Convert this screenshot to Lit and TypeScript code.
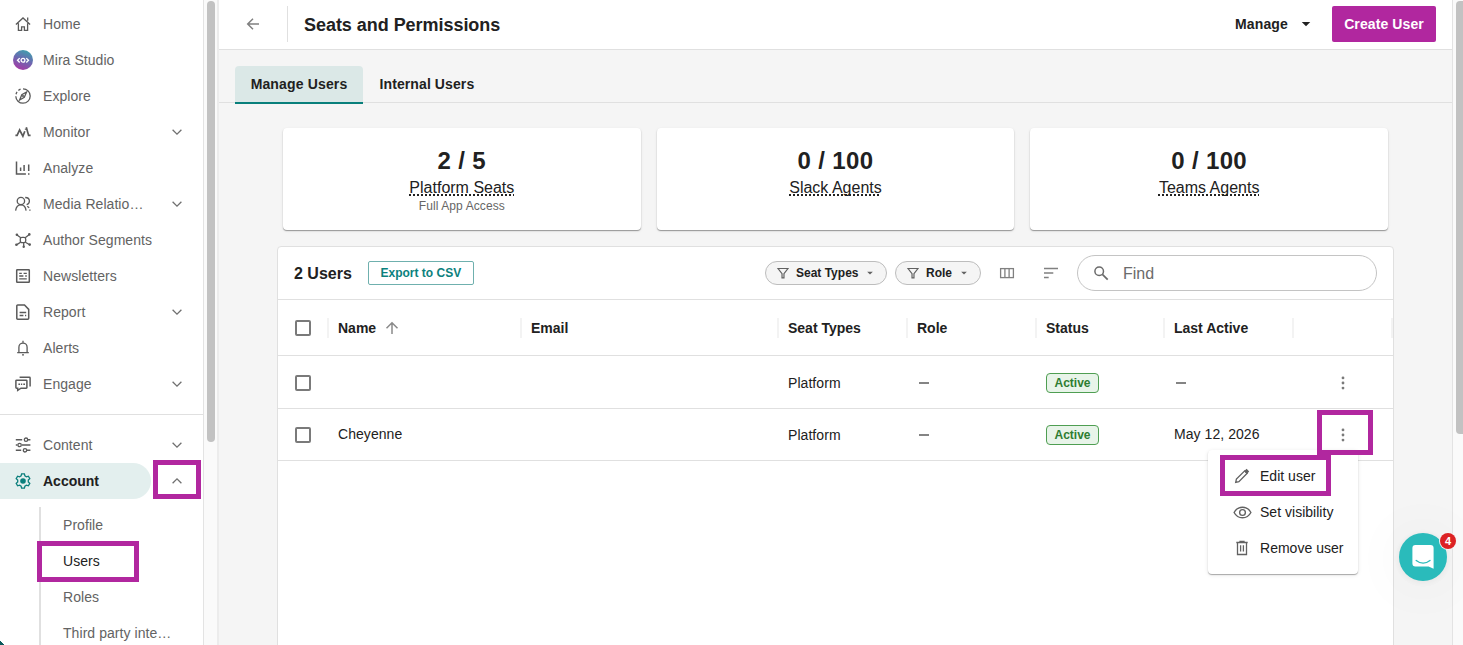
import { LitElement, html, css, svg, nothing } from "lit";
import { customElement, property } from "lit/decorators.js";
import { classMap } from "lit/directives/class-map.js";

const glyphs: Record<string, unknown> = {
  home: svg`<path d="M.9 8.400 8 1.900l7.100 6.500M3.400 7.200v7.200h3.200v-3.500h2.800v3.500h3.200V7.200M12.700 1.600v3.200" />`,
  explore: svg`<circle cx="8" cy="8" r="7.200" stroke-dasharray="33.500 2 2.500 2 2.500 2.700" transform="rotate(-90 8 8)"/><path d="M11.600 4 9.300 9.300 4.600 12l2.200-5.300z"/><circle cx="8" cy="8" r="1.100" fill="currentColor" stroke="none"/>`,
  monitor: svg`<path stroke-width="1.700" d="M.4 11.400h1.700L4.600 6l3.300 6.200 1.900-5M11.300 3.200l2.300 8.200h2"/><path stroke-width="1.700" d="M10.700 4.600v1.200"/>`,
  analyze: svg`<path d="M1.500 1.600v12.300h9.400M5.600 11V7.600M9.100 11V5M13.700 11V4.400M13 13.900h1.500" stroke-width="1.500"/>`,
  people: svg`<circle cx="5.900" cy="5" r="3.700"/><path d="M.6 14.600c.5-3.400 2.500-5.700 5.300-5.700 2.500 0 4.700 2 5.200 5.700M10.200 1.500c2.700 0 4.200 1.600 4.200 3.600 0 1.700-1 3.200-2.800 3.500M12.300 10.300l1.900 1.400M14.900 13.500v1.200"/>`,
  segments: svg`<rect x="5.300" y="5.300" width="5.400" height="5.400" rx="1.700"/><path d="M5.800 5.800 2 3M10.200 5.800 14 2.800M5.600 10.200 1.800 12.600M10.400 10.200l3.800 2.300M8.700 10.600v4"/><g fill="currentColor" stroke="none"><circle cx="1.900" cy="2.700" r="1.300"/><circle cx="14.300" cy="2.400" r="1.300"/><circle cx="1.400" cy="12.700" r="1.300"/><circle cx="14.700" cy="12.600" r="1.300"/><circle cx="8.700" cy="14.700" r="1.200"/></g>`,
  news: svg`<rect x="1.700" y="1.700" width="12.600" height="12.600" rx=".6" stroke-width="1.500"/><path d="M4.200 5.300h2.600M8.600 5.300h3.200M4.200 8h4.200M10.200 8h1.600M4.200 10.800h7.600"/>`,
  report: svg`<path stroke-width="1.500" d="M2.700 1h6.800l4.200 4.400v8.900a.9.9 0 0 1-.9.9H2.700a.9.9 0 0 1-.9-.9V1.900a.9.9 0 0 1 .9-.9z"/><path d="M4.600 8.500h6.600M4.600 11.500h3.800M10 11.500h1.200"/>`,
  bell: svg`<path d="M2.200 12.600h11.600M3.900 12.600V7.200a4.100 4.100 0 0 1 8.200 0v5.400M8 3V.8M7 14.900h2"/>`,
  engage: svg`<path stroke-width="1.500" d="M1.600 4.200h9.600a.7.7 0 0 1 .7.7v6.600a.7.7 0 0 1-.7.7H6l-3.300 2.200v-2.200H1.600a.7.7 0 0 1-.7-.7V4.900a.7.7 0 0 1 .7-.7zM4.600 1.300h9.800a.7.7 0 0 1 .7.700v8.400"/><path stroke-width="1.600" d="M3.400 8.200h1.600M5.900 8.200h1.300M8.300 8.200H10"/>`,
  content: svg`<path d="M.8 2.700h6.400M13 2.700h2.400M.8 8h1.400M7 8h8.400M.8 13.300h5.400M11.800 13.300h3.600" stroke-width="1.500"/><circle cx="11" cy="2.700" r="1.700"/><circle cx="4.600" cy="8" r="1.700"/><circle cx="10" cy="13.300" r="1.700"/>`,
  gear: svg`<path d="M6.600.9h2.800l.5 2 1.500.9 2-.6 1.400 2.400-1.500 1.500v1.800l1.500 1.500-1.400 2.400-2-.6-1.500.9-.5 2H6.600l-.5-2-1.500-.9-2 .6-1.400-2.400 1.500-1.500V7.100L1.200 5.600l1.400-2.400 2 .6 1.500-.9z"/><circle cx="8" cy="8" r="2.800" fill="currentColor" stroke="none"/>`,
  down: svg`<path d="M3.600 5.700 8 10.100l4.400-4.400"/>`,
  up: svg`<path d="M3.600 10.300 8 5.900l4.400 4.400"/>`,
  back: svg`<path stroke-width="1.500" d="M14 8H2.900M8 2.700 2.700 8 8 13.300"/>`,
  sort: svg`<path stroke-width="1.500" d="M8 13.900V2.900M2.500 8.200 8 2.700l5.500 5.500"/>`,
  funnel: svg`<path stroke-width="1.600" d="M1.400 2h13.200L9.300 9v5.600H6.700V9z"/>`,
  columns: svg`<rect x="1.600" y="3.600" width="12.800" height="9"/><path d="M5.900 3.600v9M10.100 3.600v9"/>`,
  density: svg`<path d="M1 3.500h14M1 8h9.300M1 12.500h4.700" stroke-width="1.500"/>`,
  search: svg`<circle cx="6.200" cy="6.200" r="4.300" stroke-width="1.500"/><path stroke-width="1.700" d="m9.400 9.400 5.300 5.300"/>`,
  caret: svg`<path d="M4.200 6.200h7.600L8 10z" fill="currentColor" stroke="none"/>`,
  dots: svg`<g fill="currentColor" stroke="none"><circle cx="8" cy="2.900" r="1.400"/><circle cx="8" cy="8" r="1.400"/><circle cx="8" cy="13.100" r="1.400"/></g>`,
  pencil: svg`<path d="M1.700 14.300l.7-3.200 8.300-8.300 2.500 2.500-8.300 8.300z"/><path d="M11 3.200 12.600 1.700l1.700 1.700L12.800 5z" fill="currentColor"/>`,
  eye: svg`<path d="M.1 8C1.700 5 4.600 3 8 3s6.300 2 7.900 5c-1.600 3-4.500 5-7.900 5S1.700 11 .1 8z"/><circle cx="8" cy="8" r="2.700"/>`,
  trash: svg`<path d="M2.300 2.500h11.400M6 2.300V1.300h4v1M3.500 2.600v11.900h9V2.600M6.600 5.300v6.200M9.400 5.300v6.200"/>`,
};

@customElement("ui-icon")
export class UiIcon extends LitElement {
  @property() name = "";
  @property({ type: Number }) size = 16;

  static styles = css`
    :host { display: inline-flex; flex: none; }
    svg { display: block; overflow: visible; fill: none; stroke: currentColor; stroke-width: 1.3; }
  `;

  render() {
    return html`<svg width=${this.size} height=${this.size} viewBox="0 0 16 16">${glyphs[this.name]}</svg>`;
  }
}

interface NavItem {
  label: string;
  icon: string;
  open?: boolean;
  active?: boolean;
}

const mainNav: NavItem[] = [
  { label: "Home", icon: "home" },
  { label: "Mira Studio", icon: "mira" },
  { label: "Explore", icon: "explore" },
  { label: "Monitor", icon: "monitor", open: false },
  { label: "Analyze", icon: "analyze" },
  { label: "Media Relatio…", icon: "people", open: false },
  { label: "Author Segments", icon: "segments" },
  { label: "Newsletters", icon: "news" },
  { label: "Report", icon: "report", open: false },
  { label: "Alerts", icon: "bell" },
  { label: "Engage", icon: "engage", open: false },
];

const settingsNav: NavItem[] = [
  { label: "Content", icon: "content", open: false },
  { label: "Account", icon: "gear", open: true, active: true },
];

const accountPages = ["Profile", "Users", "Roles", "Third party inte…"];

@customElement("side-nav")
export class SideNav extends LitElement {
  static styles = css`
    :host {
      display: block; width: 203px; height: 645px; flex: none; overflow: hidden; position: relative;
      background: #fff; border-right: 1px solid #e3e3e3; color: #636363; letter-spacing: 0.06px;
    }
    .group { padding: 6px 0 12px; }
    .group + .group { border-top: 1px solid #e0e0e0; padding: 12px 0 8px; }
    .row { display: flex; align-items: center; height: 36px; }
    .link { display: flex; align-items: center; width: 151px; height: 36px; padding-left: 13px; gap: 10px; box-sizing: border-box; white-space: nowrap; }
    .link.active { background: #e3efee; border-radius: 0 18px 18px 0; color: #212121; font-weight: 700; letter-spacing: 0; }
    .slot { display: flex; flex: none; width: 20px; justify-content: center; }
    .slot ui-icon { color: #5a5a5a; }
    .active .slot ui-icon { color: #0b7f7c; }
    .toggle { display: flex; width: 52px; justify-content: center; color: #707070; }
    .pages { margin-left: 39px; border-left: 2px solid #e0e0e0; padding-left: 22px; }
    .page { display: flex; align-items: center; height: 36px; }
    .page.current { color: #212121; }
    .mark { position: absolute; box-sizing: border-box; border: 5px solid #b1279f; }
    .mark.expand { left: 153px; top: 460px; width: 48px; height: 39px; }
    .mark.users { left: 37px; top: 541px; width: 102px; height: 41px; }
    .corner { position: absolute; left: -5px; bottom: -5px; width: 10px; height: 10px; background: linear-gradient(45deg, #0b5a5c 72%, transparent 73%); }
    .mira { display: block; }
  `;

  private icon(item: NavItem) {
    if (item.icon !== "mira") return html`<ui-icon name=${item.icon}></ui-icon>`;
    return html`<svg class="mira" width="20" height="20" viewBox="0 0 20 20">
      <defs><linearGradient id="g" x1=".75" y1="0" x2=".35" y2="1"><stop offset="0" stop-color="#3ca3ae"/><stop offset=".5" stop-color="#6b68b0"/><stop offset="1" stop-color="#a63aa6"/></linearGradient></defs>
      <circle cx="10" cy="10" r="10" fill="url(#g)"/>
      <g fill="none" stroke="#fff" stroke-width="1.300"><path d="M6.700 8.100 4.500 10.300l2.200 2.200M13.300 8.100l2.200 2.200-2.200 2.200"/><circle cx="10" cy="10.300" r="1.900"/></g>
    </svg>`;
  }

  private row(item: NavItem) {
    return html`<div class="row">
      <div class=${classMap({ link: true, active: !!item.active })}><span class="slot">${this.icon(item)}</span><span>${item.label}</span></div>
      ${item.open === undefined ? nothing : html`<div class="toggle"><ui-icon name=${item.open ? "up" : "down"}></ui-icon></div>`}
    </div>`;
  }

  render() {
    return html`
      <div class="group">${mainNav.map((i) => this.row(i))}</div>
      <div class="group">${settingsNav.map((i) => this.row(i))}</div>
      <div class="pages">${accountPages.map((p) => html`<div class=${classMap({ page: true, current: p === "Users" })}>${p}</div>`)}</div>
      <div class="mark expand"></div>
      <div class="mark users"></div>
      <div class="corner"></div>`;
  }
}

@customElement("seat-card")
export class SeatCard extends LitElement {
  @property() count = "";
  @property() label = "";
  @property() note = "";

  static styles = css`
    :host {
      display: flex; flex-direction: column; align-items: center; height: 102px; box-sizing: border-box; padding-top: 16px;
      background: #fff; border-radius: 4px; color: #212121;
      box-shadow: 0 1px 1px rgba(0, 0, 0, 0.34), 0 1px 3px rgba(0, 0, 0, 0.1);
    }
    .count { font-size: 24px; line-height: 34px; font-weight: 700; letter-spacing: 0.35px; }
    .label { font-size: 16px; line-height: 20px; text-decoration: underline dotted 1.5px; text-underline-offset: 0.5px; text-decoration-skip-ink: none; }
    .note { font-size: 12px; line-height: 16px; color: #666; letter-spacing: 0.1px; }
  `;

  render() {
    return html`<div class="count">${this.count}</div><div class="label">${this.label}</div>
      ${this.note ? html`<div class="note">${this.note}</div>` : nothing}`;
  }
}

interface UserRow { name: string; seat: string; lastActive: string; }
const users: UserRow[] = [
  { name: "", seat: "Platform", lastActive: "" },
  { name: "Cheyenne", seat: "Platform", lastActive: "May 12, 2026" },
];
const headers = ["Name", "Email", "Seat Types", "Role", "Status", "Last Active", ""];

@customElement("user-table")
export class UserTable extends LitElement {
  static styles = css`
    :host { display: block; box-sizing: border-box; height: 420px; background: #fff; border: 1px solid #e0e0e0; border-radius: 4px 4px 0 0; color: #212121; }
    .bar { display: flex; align-items: center; height: 52px; padding: 0 16px; border-bottom: 1px solid #e0e0e0; }
    .total { font-size: 16px; font-weight: 700; padding-top: 1px; }
    .export { margin-left: 16px; height: 24px; width: 106px; box-sizing: border-box; border: 1px solid #6fb0ae; border-radius: 2px; display: flex; align-items: center; justify-content: center; color: #0b817d; font-size: 12px; font-weight: 700; }
    .chips { display: flex; gap: 8px; margin-left: auto; }
    .chip { height: 24px; box-sizing: border-box; border: 1px solid #bdbdbd; border-radius: 12px; background: #f5f5f5; display: flex; align-items: center; padding: 0 9px 0 11px; gap: 7px; font-size: 12px; font-weight: 700; white-space: nowrap; }
    .chip ui-icon { color: #616161; }
    .chip.seats { width: 122px; }
    .chip.role { width: 86px; }
    .caret { margin-left: -1px; }
    .tools { display: flex; gap: 28px; margin: 0 18px 0 18px; color: #808080; }
    .find { display: flex; align-items: center; width: 300px; height: 36px; box-sizing: border-box; border: 1px solid #c4c4c4; border-radius: 18px; padding-left: 15px; gap: 14px; font-size: 16px; color: #6b6b6b; }
    .find span { padding-top: 1px; }
    .grid { display: grid; grid-template-columns: 50px 193px 257px 129px 129px 128px 129px 100px; align-items: center; border-bottom: 1px solid #e0e0e0; }
    .head { height: 55px; font-weight: 700; }
    .body { height: 52px; letter-spacing: 0.06px; }
    .body.last { height: 51px; }
    .body.last .name, .body.last .active { padding-bottom: 1px; }
    .th { display: flex; align-items: center; height: 20px; gap: 8px; margin-left: -1px; padding-left: 9px; border-left: 2px solid #f3f3f3; }
    .th:last-child { border-right: 2px solid #f3f3f3; }
    .th ui-icon { color: #8a8a8a; }
    .td { padding-left: 10px; display: flex; align-items: center; }
    .td.seat, .td.role, .td.status, .check, .td.menu, .td.active { padding-top: 1px; }
    .body.last .td.active { padding-top: 0; }
    .check { display: flex; padding-left: 17px; }
    .head .check { padding-top: 0; }
    .box { width: 16px; height: 16px; box-sizing: border-box; border: 2px solid #7a7a7a; border-radius: 2px; }
    .dash { margin-left: 2px; width: 10px; height: 2px; background: #848484; }
    .badge { display: flex; align-items: center; justify-content: center; width: 53px; height: 20px; box-sizing: border-box; border: 1px solid #4f9e52; border-radius: 4px; background: #e8f4e9; color: #2e7d32; font-size: 12px; font-weight: 700; letter-spacing: 0; }
    .td.menu { padding-left: 42px; color: #7a7a7a; }
  `;

  private row(u: UserRow, last: boolean) {
    return html`<div class=${classMap({ grid: true, body: true, last })}>
      <div class="check"><span class="box"></span></div>
      <div class="td name">${u.name}</div>
      <div class="td"></div>
      <div class="td seat">${u.seat}</div>
      <div class="td role"><span class="dash"></span></div>
      <div class="td status"><span class="badge">Active</span></div>
      <div class="td active">${u.lastActive || html`<span class="dash"></span>`}</div>
      <div class="td menu"><ui-icon name="dots"></ui-icon></div>
    </div>`;
  }

  render() {
    return html`
      <div class="bar">
        <span class="total">2 Users</span>
        <span class="export">Export to CSV</span>
        <div class="chips">
          <span class="chip seats"><ui-icon name="funnel" size="12"></ui-icon><span>Seat Types</span><ui-icon class="caret" name="caret" size="12"></ui-icon></span>
          <span class="chip role"><ui-icon name="funnel" size="12"></ui-icon><span>Role</span><ui-icon class="caret" name="caret" size="12"></ui-icon></span>
        </div>
        <div class="tools"><ui-icon name="columns"></ui-icon><ui-icon name="density"></ui-icon></div>
        <div class="find"><ui-icon name="search"></ui-icon><span>Find</span></div>
      </div>
      <div class="grid head">
        <div class="check"><span class="box"></span></div>
        ${headers.map((h) => html`<div class="th">${h}${h === "Name" ? html`<ui-icon name="sort"></ui-icon>` : nothing}</div>`)}
      </div>
      ${users.map((u, i) => this.row(u, i === users.length - 1))}`;
  }
}

@customElement("app-root")
export class AppRoot extends LitElement {
  static styles = css`
    :host {
      display: flex; position: relative; width: 1463px; height: 645px; overflow: hidden; background: #f5f5f5;
      font-family: "Liberation Sans", Arial, sans-serif; font-size: 14px; line-height: 20px; color: #212121;
    }
    .scroll { flex: none; box-sizing: border-box; height: 645px; background: #fafafa; padding-top: 1px; }
    .scroll.left { width: 15px; padding-left: 3px; border-right: 2px solid #ececec; }
    .scroll.right { width: 11px; padding-left: 3px; border-left: 1px solid #e3e3e3; }
    .thumb { background: #c2c2c2; border-radius: 4px; width: 8px; height: 441px; }
    .right .thumb { width: 7px; height: 433px; border-radius: 4px 0 0 4px; }
    main { flex: 1; min-width: 0; }
    header { display: flex; align-items: center; height: 49px; box-sizing: content-box; border-bottom: 1px solid #e0e0e0; background: #fff; }
    .back { display: flex; justify-content: center; width: 68px; color: #808080; padding-bottom: 1px; }
    .title { border-left: 1px solid #e0e0e0; padding-left: 16px; height: 36px; line-height: 38px; font-size: 18px; font-weight: 700; letter-spacing: -0.04px; margin-bottom: 1px; }
    .manage { margin-left: auto; display: flex; align-items: center; gap: 9px; font-weight: 700; letter-spacing: 0.15px; padding-bottom: 1px; }
    .create { margin: 0 16px 1px 17px; width: 104px; height: 36px; background: #b1279f; color: #fff; border-radius: 2px; display: flex; align-items: center; justify-content: center; font-weight: 700; letter-spacing: 0.1px; }
    nav { display: flex; align-items: flex-end; height: 52px; padding-left: 16px; border-bottom: 1px solid #e0e0e0; font-weight: 700; letter-spacing: 0.1px; }
    .tab { padding: 0 16.5px; height: 36px; line-height: 36px; }
    .tab.on { background: #dbe8e7; border-bottom: 2px solid #087f7b; border-radius: 4px 4px 0 0; margin-bottom: -2px; width: 128px; padding: 0; text-align: center; letter-spacing: 0.15px; }
    .cards { display: grid; grid-template-columns: repeat(3, 1fr); gap: 16px; margin: 25px 64px 16px; }
    user-table { margin: 0 58px; }
    .menu { position: absolute; left: 1208px; top: 450px; width: 150px; height: 124px; box-sizing: border-box; padding: 8px 0 0 25px; background: #fff; border-radius: 4px; box-shadow: 0 1px 1px rgba(0, 0, 0, 0.3), 0 1px 4px rgba(0, 0, 0, 0.1); letter-spacing: 0.02px; }
    .option { display: flex; align-items: center; height: 36px; gap: 9px; }
    .option ui-icon { color: #616161; width: 18px; justify-content: center; }
    .mark { position: absolute; box-sizing: border-box; border: 5px solid #b1279f; }
    .mark.dots { left: 1317px; top: 410px; width: 56px; height: 45px; }
    .mark.edit { left: 1220px; top: 455px; width: 111px; height: 41px; }
    .chat { position: absolute; left: 1399px; top: 533px; width: 48px; height: 48px; border-radius: 50%; background: #2abbbb; box-shadow: 0 2px 60px rgba(0, 0, 0, 0.06), 0 1px 6px rgba(0, 0, 0, 0.06); }
    .chat svg { display: block; }
    .unread { position: absolute; left: 1440px; top: 533px; width: 16px; height: 16px; border-radius: 50%; background: #dc2224; color: #fff; font-size: 11px; line-height: 16px; font-weight: 700; text-align: center; box-shadow: 0 0 0 1px #f5f5f5; }
  `;

  render() {
    return html`
      <side-nav></side-nav>
      <div class="scroll left"><div class="thumb"></div></div>
      <main>
        <header>
          <div class="back"><ui-icon name="back"></ui-icon></div>
          <div class="title">Seats and Permissions</div>
          <div class="manage"><span>Manage</span><ui-icon name="caret" size="18"></ui-icon></div>
          <div class="create">Create User</div>
        </header>
        <nav><span class="tab on">Manage Users</span><span class="tab">Internal Users</span></nav>
        <div class="cards">
          <seat-card count="2 / 5" label="Platform Seats" note="Full App Access"></seat-card>
          <seat-card count="0 / 100" label="Slack Agents"></seat-card>
          <seat-card count="0 / 100" label="Teams Agents"></seat-card>
        </div>
        <user-table></user-table>
      </main>
      <div class="scroll right"><div class="thumb"></div></div>
      <div class="menu">
        <div class="option"><ui-icon name="pencil"></ui-icon>Edit user</div>
        <div class="option"><ui-icon name="eye" size="17"></ui-icon>Set visibility</div>
        <div class="option"><ui-icon name="trash"></ui-icon>Remove user</div>
      </div>
      <div class="mark dots"></div>
      <div class="mark edit"></div>
      <div class="chat"><svg width="48" height="48" viewBox="0 0 48 48"><path fill="#fff" d="M16.400 12h15.200a3 3 0 0 1 3 3v20.800l-5-2.400H16.400a3 3 0 0 1-3-3V15a3 3 0 0 1 3-3z"/><path d="M17.200 27.500c4.200 3.300 9.600 3.300 13.800 0" fill="none" stroke="#2abbbb" stroke-width="1.300" stroke-linecap="round"/></svg></div>
      <div class="unread">4</div>`;
  }
}
